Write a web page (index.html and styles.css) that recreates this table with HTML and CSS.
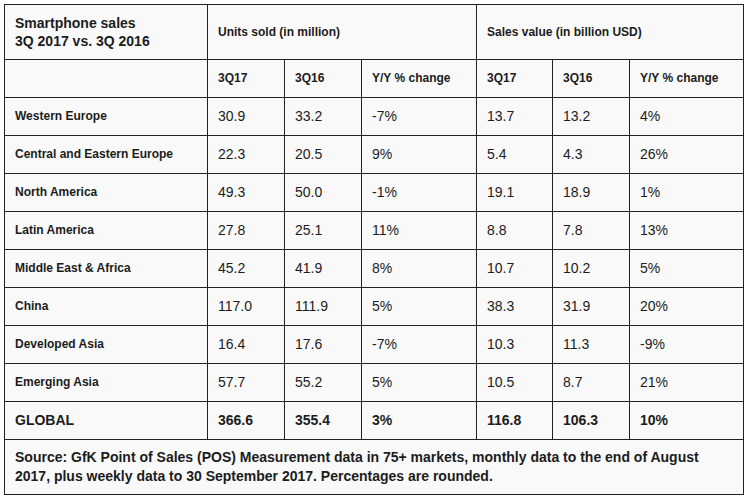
FILE: index.html
```html
<!DOCTYPE html>
<html lang="en">
<head>
<meta charset="utf-8">
<title>Smartphone sales</title>
<link rel="stylesheet" href="styles.css">
</head>
<body>
<table class="sales">
  <colgroup>
    <col class="c-region">
    <col class="c-num">
    <col class="c-num">
    <col class="c-chg">
    <col class="c-num2">
    <col class="c-num">
    <col class="c-chg2">
  </colgroup>
  <thead>
    <tr class="row-top">
      <th class="title">Smartphone sales<br>3Q 2017 vs. 3Q 2016</th>
      <th colspan="3" class="group">Units sold (in million)</th>
      <th colspan="3" class="group">Sales value (in billion USD)</th>
    </tr>
    <tr class="row-sub">
      <th></th>
      <th>3Q17</th>
      <th>3Q16</th>
      <th>Y/Y % change</th>
      <th>3Q17</th>
      <th>3Q16</th>
      <th>Y/Y % change</th>
    </tr>
  </thead>
  <tbody>
    <tr><th>Western Europe</th><td>30.9</td><td>33.2</td><td>-7%</td><td>13.7</td><td>13.2</td><td>4%</td></tr>
    <tr><th>Central and Eastern Europe</th><td>22.3</td><td>20.5</td><td>9%</td><td>5.4</td><td>4.3</td><td>26%</td></tr>
    <tr><th>North America</th><td>49.3</td><td>50.0</td><td>-1%</td><td>19.1</td><td>18.9</td><td>1%</td></tr>
    <tr><th>Latin America</th><td>27.8</td><td>25.1</td><td>11%</td><td>8.8</td><td>7.8</td><td>13%</td></tr>
    <tr><th>Middle East &amp; Africa</th><td>45.2</td><td>41.9</td><td>8%</td><td>10.7</td><td>10.2</td><td>5%</td></tr>
    <tr><th>China</th><td>117.0</td><td>111.9</td><td>5%</td><td>38.3</td><td>31.9</td><td>20%</td></tr>
    <tr><th>Developed Asia</th><td>16.4</td><td>17.6</td><td>-7%</td><td>10.3</td><td>11.3</td><td>-9%</td></tr>
    <tr><th>Emerging Asia</th><td>57.7</td><td>55.2</td><td>5%</td><td>10.5</td><td>8.7</td><td>21%</td></tr>
    <tr class="global"><th>GLOBAL</th><td>366.6</td><td>355.4</td><td>3%</td><td>116.8</td><td>106.3</td><td>10%</td></tr>
  </tbody>
  <tfoot>
    <tr><td colspan="7" class="source">Source: GfK Point of Sales (POS) Measurement data in 75+ markets, monthly data to the end of August 2017, plus weekly data to 30 September 2017. Percentages are rounded.</td></tr>
  </tfoot>
</table>
</body>
</html>
```

FILE: styles.css
```css
html, body {
  margin: 0;
  padding: 0;
  background: #ffffff;
}

body {
  font-family: "Liberation Sans", Arial, Helvetica, sans-serif;
  color: #1c1c1c;
}

.sales {
  margin: 4px;
  width: 740px;
  table-layout: fixed;
  border-collapse: collapse;
  background: #f9f9f9;
  border: 1px solid #222;
}

.c-region { width: 203px; }
.c-num { width: 77px; }
.c-chg { width: 115px; }
.c-num2 { width: 76px; }
.c-chg2 { width: 114px; }

.sales th,
.sales td {
  border: 1px solid #222;
  padding: 9px 10px;
  text-align: left;
  vertical-align: middle;
  line-height: 19px;
  white-space: nowrap;
}

.sales th {
  font-weight: bold;
  font-size: 12px;
}

.sales td {
  font-weight: normal;
  font-size: 14px;
}

.sales .title {
  font-size: 14px;
  line-height: 18px;
  padding: 9px 10px;
}

.sales .global th,
.sales .global td {
  font-weight: bold;
  font-size: 14px;
}

.sales .source {
  font-weight: bold;
  font-size: 14px;
  line-height: 19px;
  padding: 8px 10px;
  white-space: normal;
}
```
